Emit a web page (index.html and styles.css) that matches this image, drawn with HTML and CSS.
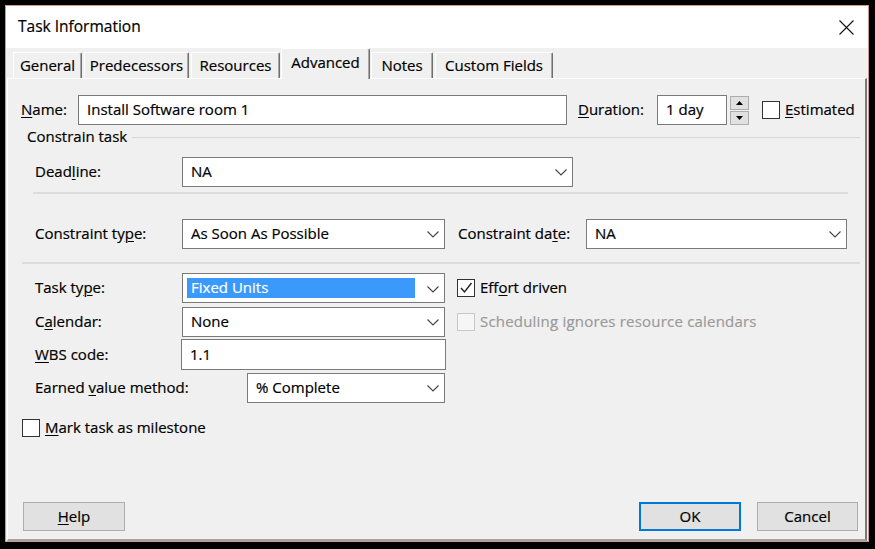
FILE: index.html
```html
<!DOCTYPE html>
<html>
<head>
<meta charset="utf-8">
<title>Task Information</title>
<link rel="stylesheet" href="styles.css">
</head>
<body>
<div class="window">
  <div class="titlebar">
    <span class="title">Task Information</span>
    <svg class="close" width="15" height="15" viewBox="0 0 15 15"><path d="M0.5 0.5 L14.5 14.5 M14.5 0.5 L0.5 14.5" stroke="#111" stroke-width="1.1" fill="none"/></svg>
  </div>
  <div class="tabs">
    <div class="tab w-general">General</div>
    <div class="tab w-pred">Predecessors</div>
    <div class="tab w-res">Resources</div>
    <div class="tab active w-adv">Advanced</div>
    <div class="tab w-notes">Notes</div>
    <div class="tab w-custom">Custom Fields</div>
  </div>
  <div class="panel">
    <div class="row row-name">
      <label class="lbl lbl-name"><u>N</u>ame:</label>
      <div class="field f-name">Install Software room 1</div>
      <label class="lbl lbl-dur"><u>D</u>uration:</label>
      <div class="field f-dur">1 day</div>
      <div class="spin">
        <span><svg width="7" height="4" viewBox="0 0 7 4"><path d="M0 4 L3.5 0 L7 4 Z" fill="#000"/></svg></span>
        <span><svg width="7" height="4" viewBox="0 0 7 4"><path d="M0 0 L3.5 4 L7 0 Z" fill="#000"/></svg></span>
      </div>
      <span class="cb cb-est"></span>
      <label class="cb-lbl"><u>E</u>stimated</label>
    </div>

    <div class="group-head">
      <span class="lbl">Constrain task</span>
      <span class="group-line"></span>
    </div>

    <div class="row row-deadline">
      <label class="lbl lbl-main">Dead<u>l</u>ine:</label>
      <div class="field select f-deadline"><span>NA</span><svg class="chev" width="12" height="7" viewBox="0 0 12 7"><path d="M0.5 0.5 L6 6 L11.5 0.5" fill="none" stroke="#444" stroke-width="1.1"/></svg></div>
    </div>

    <div class="sep sep-inner"></div>

    <div class="row row-constraint">
      <label class="lbl lbl-main">Constraint ty<u>p</u>e:</label>
      <div class="field select f-mid"><span>As Soon As Possible</span><svg class="chev" width="12" height="7" viewBox="0 0 12 7"><path d="M0.5 0.5 L6 6 L11.5 0.5" fill="none" stroke="#444" stroke-width="1.1"/></svg></div>
      <label class="lbl lbl-cdate">Constraint da<u>t</u>e:</label>
      <div class="field select f-cdate"><span>NA</span><svg class="chev" width="12" height="7" viewBox="0 0 12 7"><path d="M0.5 0.5 L6 6 L11.5 0.5" fill="none" stroke="#444" stroke-width="1.1"/></svg></div>
    </div>

    <div class="sep sep-full"></div>

    <div class="cols">
      <div class="col-left">
        <div class="row">
          <label class="lbl lbl-main">Task ty<u>p</u>e:</label>
          <div class="field select f-mid f-hl"><span class="hl">Fixed Units</span><svg class="chev" width="12" height="7" viewBox="0 0 12 7"><path d="M0.5 0.5 L6 6 L11.5 0.5" fill="none" stroke="#444" stroke-width="1.1"/></svg></div>
        </div>
        <div class="row row-cal">
          <label class="lbl lbl-main">C<u>a</u>lendar:</label>
          <div class="field select f-mid"><span>None</span><svg class="chev" width="12" height="7" viewBox="0 0 12 7"><path d="M0.5 0.5 L6 6 L11.5 0.5" fill="none" stroke="#444" stroke-width="1.1"/></svg></div>
        </div>
        <div class="row row-wbs">
          <label class="lbl lbl-wbs"><u>W</u>BS code:</label>
          <div class="field f-wbs">1.1</div>
        </div>
        <div class="row row-earned">
          <label class="lbl lbl-earned">Earned <u>v</u>alue method:</label>
          <div class="field select f-earned"><span>% Complete</span><svg class="chev" width="12" height="7" viewBox="0 0 12 7"><path d="M0.5 0.5 L6 6 L11.5 0.5" fill="none" stroke="#444" stroke-width="1.1"/></svg></div>
        </div>
      </div>
      <div class="col-right">
        <div class="row">
          <span class="cb"><svg width="16" height="16" viewBox="0 0 16 16"><path d="M3 8 L6.5 12 L13.5 3" fill="none" stroke="#222" stroke-width="1.4"/></svg></span>
          <label class="cb-lbl">Eff<u>o</u>rt driven</label>
        </div>
        <div class="row row-cal">
          <span class="cb cb-dis"></span>
          <label class="cb-lbl dis">Schedulin<u>g</u> ignores resource calendars</label>
        </div>
      </div>
    </div>

    <div class="row row-mile">
      <span class="cb"></span>
      <label class="cb-lbl"><u>M</u>ark task as milestone</label>
    </div>

    <div class="buttons">
      <div class="btn btn-help"><span><u>H</u>elp</span></div>
      <div class="btn-group">
        <div class="btn btn-default">OK</div>
        <div class="btn btn-cancel">Cancel</div>
      </div>
    </div>
  </div>
</div>
</body>
</html>
```
FILE: styles.css
```css
* { box-sizing: border-box; }
html, body { margin: 0; padding: 0; }
body {
  background: #000;
  width: 875px;
  height: 549px;
  overflow: hidden;
  font-family: "Open Sans", "Noto Sans", sans-serif;
  font-size: 15px;
  color: #000;
  -webkit-text-stroke: 0.2px currentColor;
}
u { text-decoration: underline; text-underline-offset: 2px; text-decoration-thickness: 1px; }

.window {
  margin: 5px 0 0 5px;
  width: 864px;
  height: 537px;
  border: 1px solid #cf9a8e;
  background: #f0f0f0;
  display: flex;
  flex-direction: column;
}
.titlebar {
  flex: none;
  height: 42px;
  background: #fff;
  display: flex;
  align-items: center;
  justify-content: space-between;
  padding: 0 14px 0 12px;
}
.title { font-size: 15.5px; color: #000; padding-bottom: 2px; }

.tabs {
  flex: none;
  height: 30px;
  display: flex;
  align-items: flex-end;
  padding-left: 7px;
  gap: 2px;
}
.tab {
  height: 26px;
  border-top: 1px solid #fff;
  border-left: 1px solid #fff;
  border-right: 1px solid #6f6f6f;
  box-shadow: inset -1px 0 #a8a8a8;
  border-top-right-radius: 2px;
  display: flex;
  align-items: center;
  justify-content: center;
  background: #f0f0f0;
  padding-bottom: 2px;
}
.tab.active {
  height: 31px;
  margin: 0 -1px -1px;
  position: relative;
  z-index: 1;
  padding-bottom: 4px;
}
.w-general { width: 69px; }
.w-pred { width: 105px; }
.w-res { width: 89px; }
.w-adv { width: 89px; }
.w-notes { width: 62px; }
.w-custom { width: 118px; }

.panel {
  flex: 1;
  margin: 0 1px 0 1px;
  border-top: 1px solid #fff;
  border-left: 1px solid #fff;
  border-right: 2px solid #7a7a7a;
  border-bottom: 2px solid #a3a3a3;
  padding: 0 5px 8px 14px;
  display: flex;
  flex-direction: column;
}

.row {
  display: flex;
  align-items: center;
  height: 30px;
}
.lbl { flex: none; white-space: nowrap; padding-bottom: 2px; }
.field {
  flex: none;
  height: 30px;
  background: #fff;
  border: 1px solid #7a7a7a;
  display: flex;
  align-items: center;
  padding-left: 8px;
  padding-bottom: 2px;
  white-space: nowrap;
}
.select { justify-content: space-between; padding-right: 5px; }
.chev { flex: none; margin-top: 2px; }

.row-name { margin-top: 16px; }
.lbl-name { width: 57px; margin-left: -1px; }
.f-name { width: 489px; }
.lbl-dur { width: 79px; margin-left: 11px; }
.f-dur { width: 70px; }
.spin {
  width: 19px;
  height: 29px;
  margin-left: 3px;
  display: flex;
  flex-direction: column;
  gap: 1px;
}
.spin span {
  flex: 1;
  background: #e1e1e1;
  border: 1px solid #adadad;
  display: flex;
  align-items: center;
  justify-content: center;
}
.cb {
  flex: none;
  width: 18px;
  height: 18px;
  border: 1px solid #333;
  background: #fff;
  display: flex;
  align-items: center;
  justify-content: center;
}
.cb-est { margin-left: 13px; }
.cb-lbl { margin-left: 5px; white-space: nowrap; padding-bottom: 2px; }
.cb-dis { border-color: #c8c8c8; background: #f6f6f6; }
.dis { color: #9a9a9a; letter-spacing: 0.2px; }

.group-head {
  margin-top: 2px;
  height: 20px;
  padding-left: 5px;
  display: flex;
  align-items: center;
}
.group-line { flex: 1; height: 1px; background: #d7d7d7; margin-left: 5px; }

.row-deadline { margin-top: 10px; padding-left: 13px; }
.lbl-main { width: 147px; }
.f-deadline { width: 391px; }

.sep { height: 2px; background: #dcdcdc; }
.sep-inner { margin: 5px 12px 0 11px; }
.sep-full { margin-top: 13px; }

.row-constraint { margin-top: 25px; padding-left: 13px; }
.f-mid { width: 263px; }
.lbl-cdate { width: 128px; margin-left: 13px; }
.f-cdate { width: 261px; }

.cols { display: flex; margin-top: 9px; }
.col-left { width: 423px; padding-left: 13px; }
.col-right { margin-left: 12px; }
.col-right .cb-lbl { margin-left: 5px; }
.row-cal { margin-top: 4px; }
.row-wbs { margin-top: 2px; height: 31px; }
.lbl-wbs { width: 146px; }
.f-wbs { width: 265px; height: 31px; }
.row-earned { margin-top: 3px; }
.lbl-earned { width: 212px; }
.f-earned { width: 198px; }

.f-hl { padding-left: 4px; padding-bottom: 0; }
.hl {
  width: 228px;
  height: 20px;
  background: #3b99fc;
  color: #fff;
  padding-left: 4px;
  padding-bottom: 2px;
  display: flex;
  align-items: center;
}

.row-mile { margin-top: 15px; height: 20px; }

.buttons {
  margin-top: auto;
  display: flex;
  justify-content: space-between;
  align-items: center;
  padding-left: 1px;
  padding-right: 2px;
}
.btn-group { display: flex; gap: 16px; }
.btn {
  width: 102px;
  height: 29px;
  background: #e1e1e1;
  border: 1px solid #adadad;
  display: flex;
  align-items: center;
  justify-content: center;
  padding-bottom: 2px;
}
.btn-default { border: 2px solid #0078d7; }
.btn-cancel { width: 101px; }
```
